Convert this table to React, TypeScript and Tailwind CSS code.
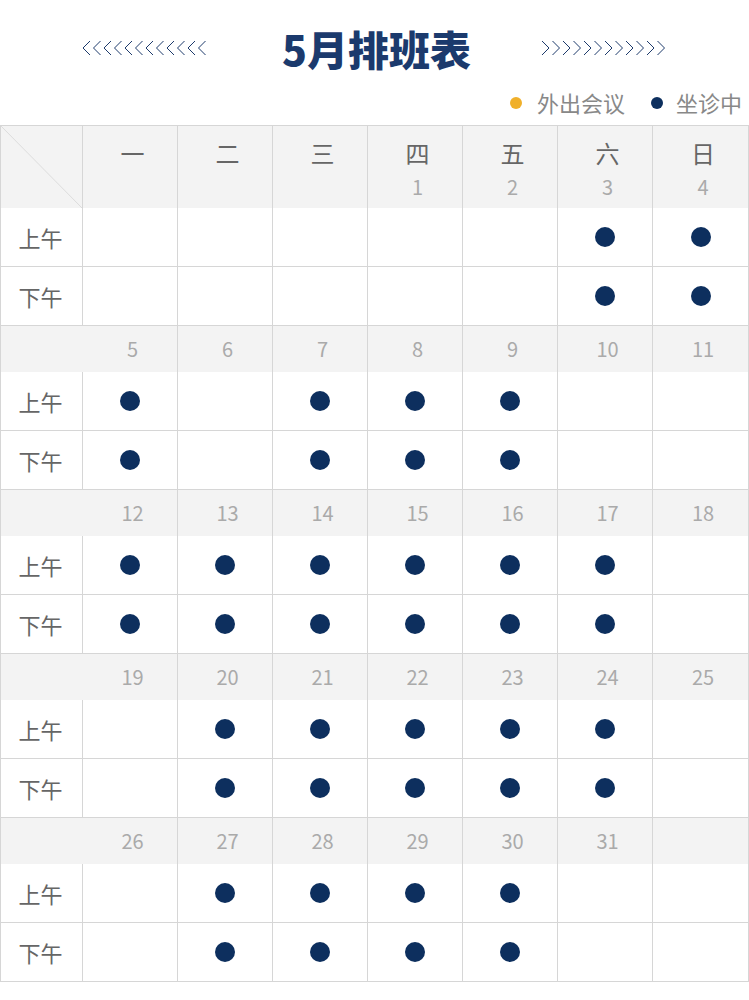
import React from 'react';

const WEEKDAYS = ['一', '二', '三', '四', '五', '六', '日'];

// each week: dates (null = empty) and which columns have a dot
const WEEKS: { dates: (number | null)[]; on: number[] }[] = [
  { dates: [null, null, null, 1, 2, 3, 4], on: [5, 6] },
  { dates: [5, 6, 7, 8, 9, 10, 11], on: [0, 2, 3, 4] },
  { dates: [12, 13, 14, 15, 16, 17, 18], on: [0, 1, 2, 3, 4, 5] },
  { dates: [19, 20, 21, 22, 23, 24, 25], on: [1, 2, 3, 4, 5] },
  { dates: [26, 27, 28, 29, 30, 31, null], on: [1, 2, 3, 4] },
];

const cols = 'grid grid-cols-[82px_repeat(7,minmax(0,1fr))]';
const font = { fontFamily: '"Noto Sans CJK SC", "Noto Sans", sans-serif' };

function Chevrons({ dir }: { dir: 'left' | 'right' }) {
  return (
    <svg width="126" height="16" viewBox="0 0 126 16" fill="none">
      {Array.from({ length: 12 }).map((_, i) => {
        const x = i * 10.5 + 1;
        const d = dir === 'left' ? `M${x + 7} 1 L${x} 8 L${x + 7} 15` : `M${x} 1 L${x + 7} 8 L${x} 15`;
        return <path key={i} d={d} stroke="#1d3a6b" strokeWidth="1" />;
      })}
    </svg>
  );
}

function Dot() {
  return <span className="block w-5 h-5 rounded-full bg-[#0d2f5e]" />;
}

function SlotRow({ label, on }: { label: string; on: number[] }) {
  return (
    <div className={`${cols} h-[59px] border-b border-[#d6d6d6]`}>
      <div className="flex items-center justify-center pr-[2px] text-[22px] text-[#666] border-r border-[#d6d6d6]">{label}</div>
      {WEEKDAYS.map((_, i) => (
        <div key={i} className={`flex items-center justify-center ${i < 6 ? 'border-r border-[#d6d6d6]' : ''}`}>
          {on.includes(i) && <Dot />}
        </div>
      ))}
    </div>
  );
}

export default function App() {
  return (
    <div className="w-[749px] h-[1000px] bg-white overflow-hidden" style={font}>
      {/* Title */}
      <div className="flex items-center justify-center h-[84px] pt-[12px]">
        <Chevrons dir="left" />
        <h1 className="ml-[74px] mr-[70px] text-[41px] font-black text-[#1b3a6d] leading-none">5月排班表</h1>
        <Chevrons dir="right" />
      </div>

      {/* Legend */}
      <div className="flex items-center justify-end h-[41px] pr-[7px] pb-[4px] text-[22px] text-[#888]">
        <span className="w-[12px] h-[12px] rounded-full bg-[#f0b02a] mr-[15px]" />
        <span className="mr-[26px]">外出会议</span>
        <span className="w-[12px] h-[12px] rounded-full bg-[#0d2f5e] mr-[13px]" />
        <span>坐诊中</span>
      </div>

      {/* Table */}
      <div className="border-l border-r border-t border-[#d6d6d6]">
        {WEEKS.map((week, w) => (
          <div key={w}>
            {w === 0 ? (
              <div className={`${cols} h-[82px] bg-[#f3f3f3]`}>
                <div className="relative border-r border-[#d6d6d6]">
                  <svg className="absolute inset-0 w-full h-full" viewBox="0 0 82 82" preserveAspectRatio="none">
                    <line x1="0" y1="0" x2="82" y2="82" stroke="#dcdcdc" strokeWidth="1" />
                  </svg>
                </div>
                {WEEKDAYS.map((d, i) => (
                  <div key={d} className={`flex flex-col items-center pt-[9px] pl-[5px] ${i < 6 ? 'border-r border-[#d6d6d6]' : ''}`}>
                    <span className="text-[24px] leading-[36px] text-[#666]">{d}</span>
                    <span className="mt-[2px] text-[20px] leading-[28px] text-[#aaa]">{week.dates[i] ?? ''}</span>
                  </div>
                ))}
              </div>
            ) : (
              <div className={`${cols} h-[46px] bg-[#f3f3f3]`}>
                <div />
                {week.dates.map((d, i) => (
                  <div
                    key={i}
                    className={`flex items-center justify-center pl-[5px] text-[20px] text-[#aaa] ${i < 6 ? 'border-r border-[#d6d6d6]' : ''}`}
                  >
                    {d ?? ''}
                  </div>
                ))}
              </div>
            )}
            <SlotRow label="上午" on={week.on} />
            <SlotRow label="下午" on={week.on} />
          </div>
        ))}
      </div>
    </div>
  );
}
